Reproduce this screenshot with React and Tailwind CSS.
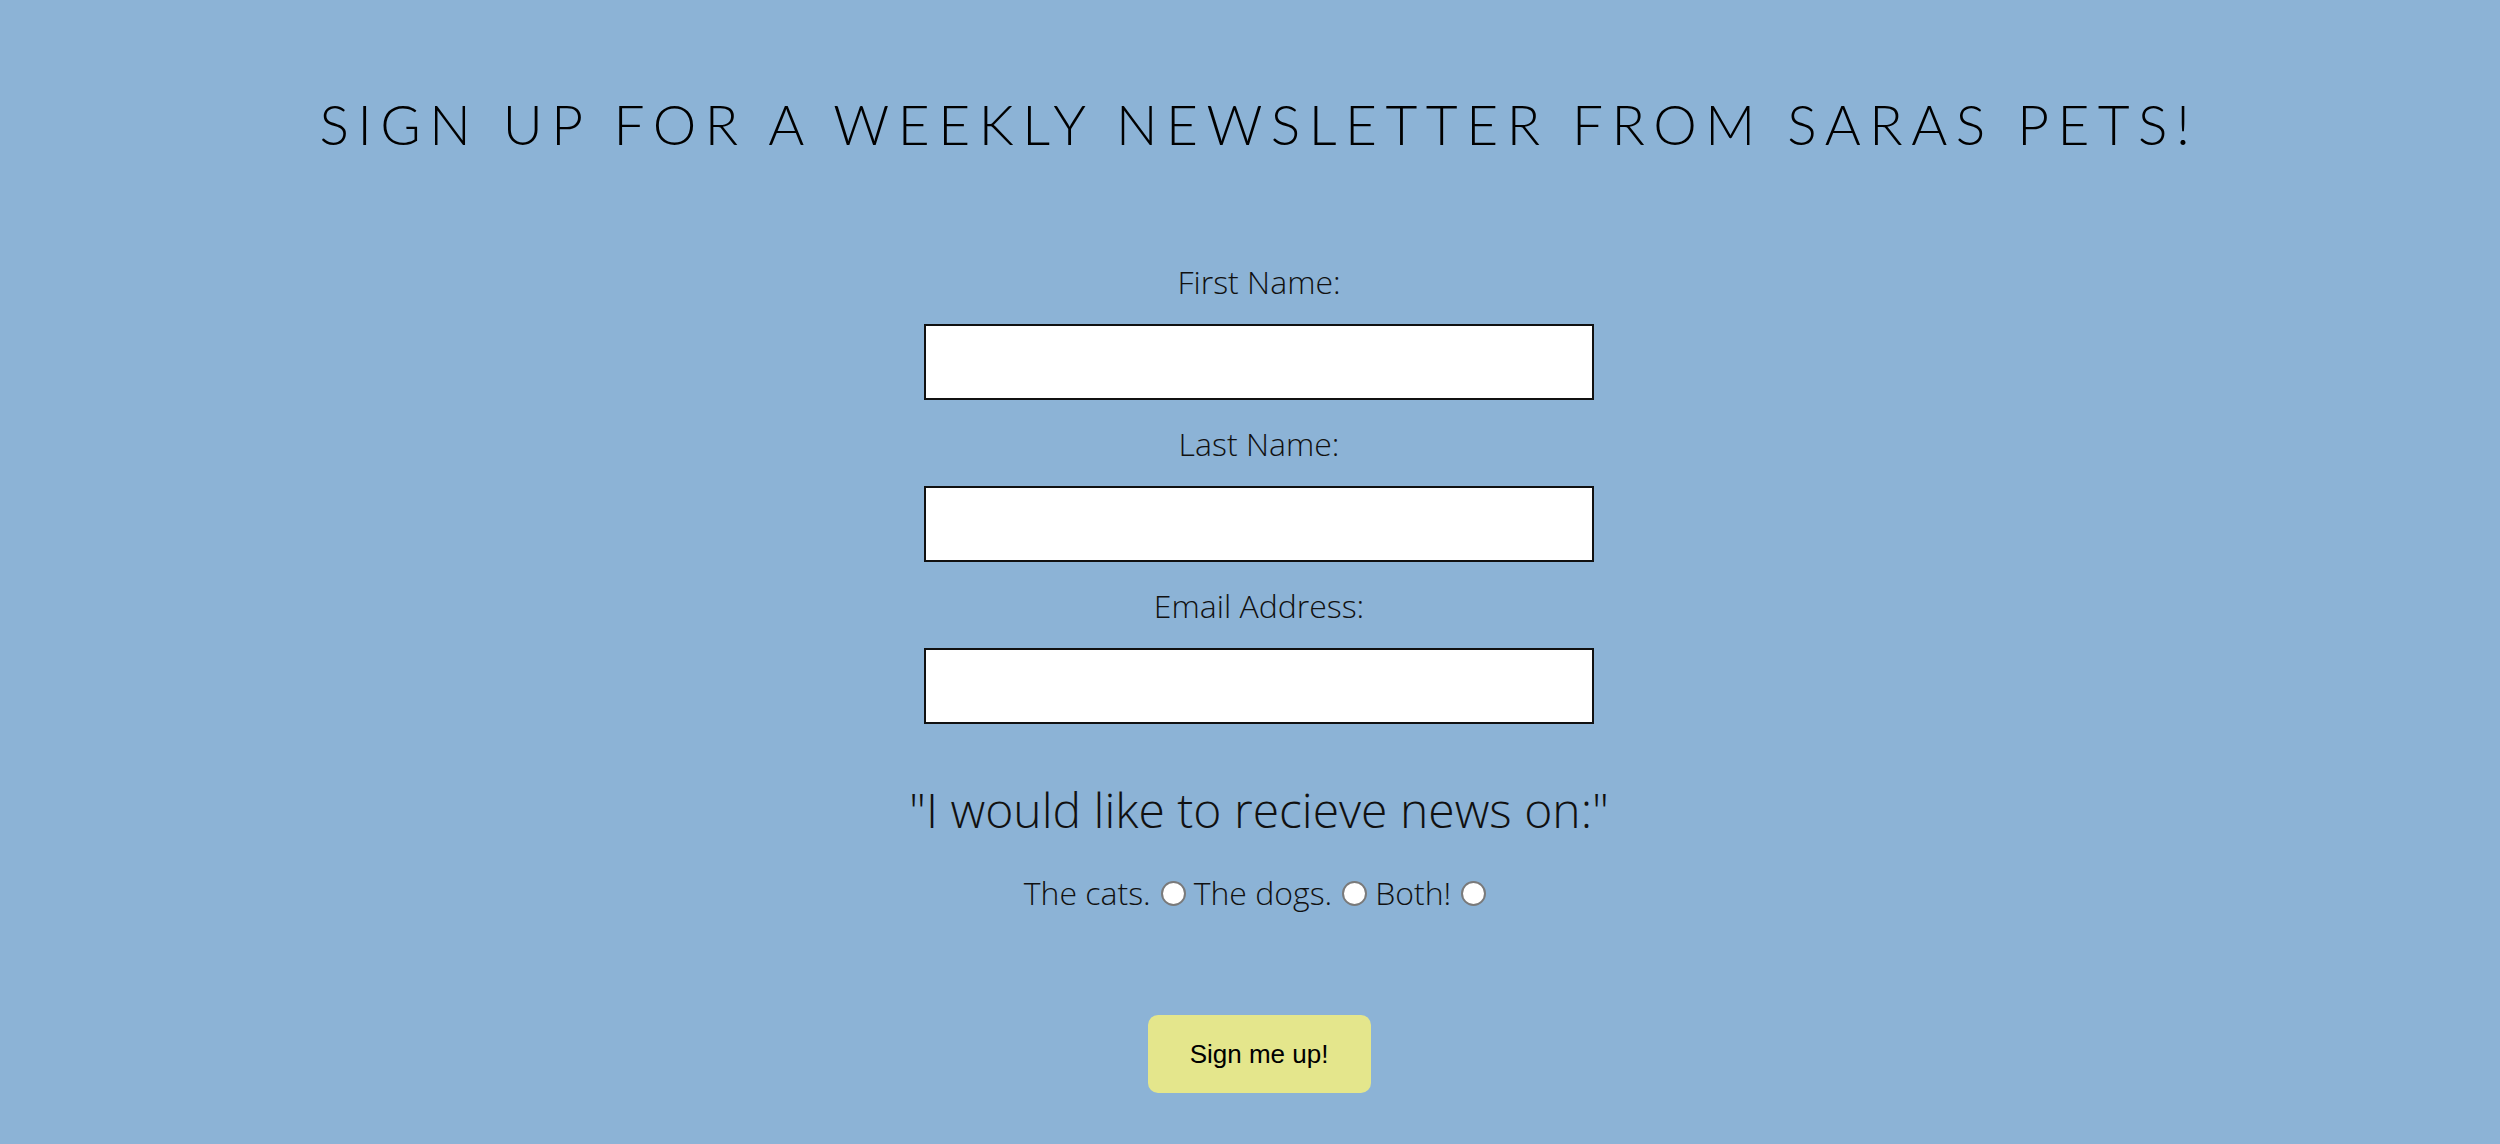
import { useState } from 'react'

const fields = [
  { id: 'fname', label: 'First Name:' },
  { id: 'lname', label: 'Last Name:' },
  { id: 'email', label: 'Email Address:' },
]

const options = ['The cats.', 'The dogs.', 'Both!']

export default function App() {
  const [choice, setChoice] = useState('')

  return (
    <div className="min-h-[1144px] w-full bg-[#8cb3d6] pl-[18px] text-black overflow-hidden">
      <h1 className="pt-[84px] text-center text-[55px] leading-[80px] tracking-[0.155em] font-[Lato,sans-serif] font-light">
        SIGN UP FOR A WEEKLY NEWSLETTER FROM SARAS PETS!
      </h1>

      <form className="mt-[96px] flex flex-col items-center font-['Open_Sans',sans-serif] font-light">
        {fields.map((f, i) => (
          <div key={f.id} className={`flex flex-col items-center ${i > 0 ? 'mt-[22px]' : ''}`}>
            <label htmlFor={f.id} className="text-[32px] leading-[44px] mb-[20px] text-[#111]">
              {f.label}
            </label>
            <input
              id={f.id}
              type={f.id === 'email' ? 'email' : 'text'}
              className="w-[670px] h-[76px] bg-white border-2 border-[#111] outline-none"
            />
          </div>
        ))}

        <p className="mt-[54px] text-[48px] leading-[64px] text-[#111]">"I would like to recieve news on:"</p>

        <div className="mt-[29px] flex items-center text-[32px] leading-[44px] text-[#111]">
          {options.map((o) => (
            <label key={o} className="flex items-center mr-[8px]">
              <span>{o}</span>
              <input
                type="radio"
                name="news"
                checked={choice === o}
                onChange={() => setChoice(o)}
                className="appearance-none ml-[10px] w-[25px] h-[25px] rounded-full bg-white border-2 border-[#7a7a7a]"
              />
            </label>
          ))}
        </div>

        <button
          type="button"
          className="mt-[100px] w-[223px] h-[78px] rounded-[10px] bg-[#e4e68c] text-[26px] font-normal font-['Liberation_Sans',Arial,sans-serif] text-black"
        >
          Sign me up!
        </button>
      </form>
    </div>
  )
}
